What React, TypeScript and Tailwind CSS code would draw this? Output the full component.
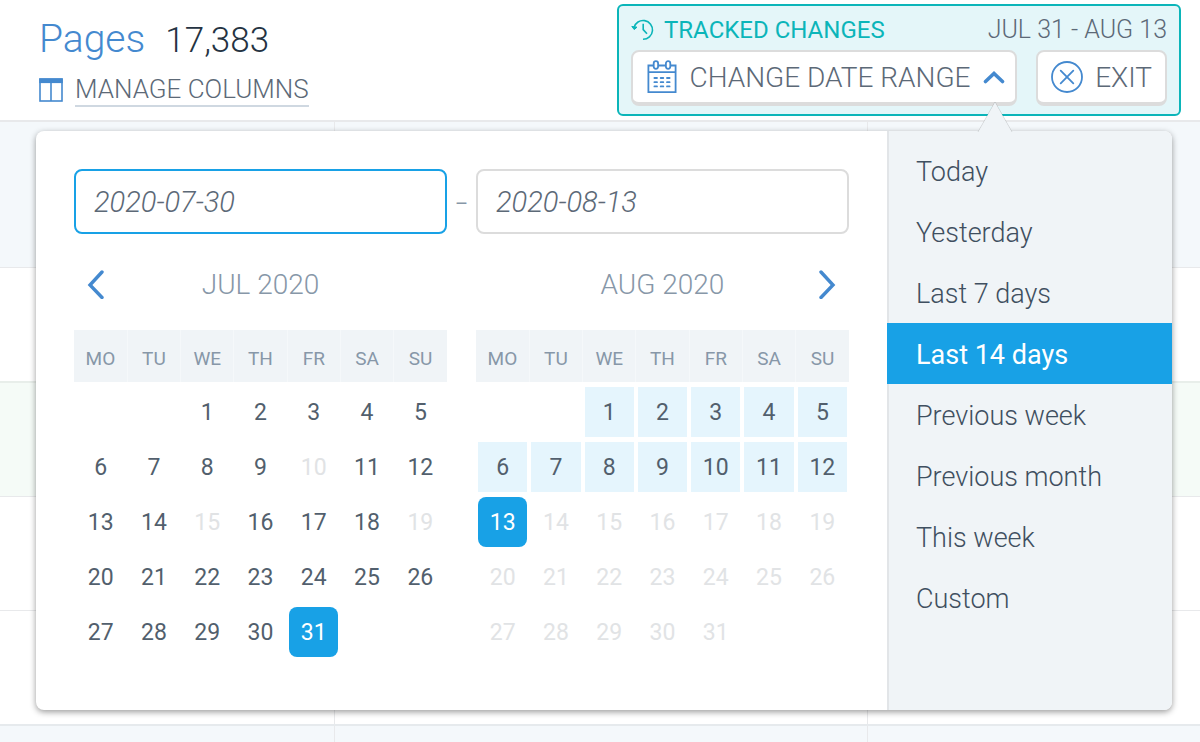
import { useState } from 'react';

type Month = {
  title: string;
  offset: number;
  days: number;
  selected: number;
  muted: number[];
  range: number[];
};

const WEEKDAYS = ['MO', 'TU', 'WE', 'TH', 'FR', 'SA', 'SU'];

const PRESETS = [
  'Today',
  'Yesterday',
  'Last 7 days',
  'Last 14 days',
  'Previous week',
  'Previous month',
  'This week',
  'Custom',
];

const days = (from: number, to: number) => Array.from({ length: to - from + 1 }, (_, i) => from + i);

const JULY: Month = { title: 'JUL 2020', offset: 2, days: 31, selected: 31, muted: [10, 15, 19], range: [] };
const AUGUST: Month = { title: 'AUG 2020', offset: 2, days: 31, selected: 13, muted: days(14, 31), range: days(1, 12) };

function toWeeks(month: Month) {
  const cells: (number | null)[] = [...Array(month.offset).fill(null), ...days(1, month.days)];
  while (cells.length % 7 !== 0) cells.push(null);
  const weeks: (number | null)[][] = [];
  for (let i = 0; i < cells.length; i += 7) weeks.push(cells.slice(i, i + 7));
  return weeks;
}

function ColumnsIcon() {
  return (
    <svg width="24" height="24" viewBox="0 0 24 24" fill="none" stroke="#4489cf" strokeWidth="1.6" aria-hidden="true">
      <rect x="1" y="1" width="22" height="22" />
      <path d="M0.2 2.8h23.6" strokeWidth="4.6" />
      <path d="M12 4v19" />
    </svg>
  );
}

function HistoryIcon() {
  return (
    <svg width="23" height="22" viewBox="0 0 23 22" fill="none" stroke="#0bb5b9" strokeWidth="1.6" aria-hidden="true">
      <path d="M3 8.6A9.4 9.4 0 1 1 12 20.3" />
      <path d="M12.2 4.8v5.8l3.8 4.2" />
      <path d="M0.8 7.4L3.2 10.6L6 8.2Z" fill="#0bb5b9" strokeWidth="1" strokeLinejoin="round" />
    </svg>
  );
}

function CalendarIcon() {
  return (
    <svg width="30" height="34" viewBox="0 0 30 34" fill="none" stroke="#4489cf" strokeWidth="1.8" aria-hidden="true">
      <path d="M6.7 5.5H1.4v26.6h27.2V5.5H23.3M11.3 5.5h7.4M1 12.2h28" />
      <rect x="6.7" y="1.2" width="4.4" height="7.6" rx="2.2" />
      <rect x="18.9" y="1.2" width="4.4" height="7.6" rx="2.2" />
      <path
        d="M7.4 18h2.6M13.7 18h2.6M20 18h2.6M7.4 22.2h2.6M13.7 22.2h2.6M20 22.2h2.6M7.4 26.4h2.6M13.7 26.4h2.6M20 26.4h2.6"
        strokeLinecap="round"
      />
    </svg>
  );
}

function CloseCircleIcon() {
  return (
    <svg width="32" height="32" viewBox="0 0 32 32" fill="none" stroke="#4489cf" strokeWidth="1.8" aria-hidden="true">
      <circle cx="16" cy="16" r="15" />
      <path d="M9.7 9.7l12.6 12.6M22.3 9.7l-12.6 12.6" strokeLinecap="round" />
    </svg>
  );
}

function Header() {
  return (
    <header className="flex items-start justify-between border-b-2 border-[#e8e9eb] bg-white pt-1 pr-[19px] pb-1 pl-[39px]">
      <div className="pt-3">
        <h1 className="flex items-baseline gap-5 leading-[46px] font-light">
          <span className="text-[39px] text-[#4489cf]">Pages</span>
          <span className="text-[35px] text-[#253342]">17,383</span>
        </h1>
        <button type="button" className="mt-[9px] flex items-center gap-3">
          <ColumnsIcon />
          <span className="border-b-2 border-[#cfd8e1] text-[26px] leading-[32px] font-light text-[#5c6977]">
            MANAGE COLUMNS
          </span>
        </button>
      </div>

      <section className="rounded-[6px] border-2 border-[#0bb5b9] bg-[#e4f6f9] px-3 pb-2">
        <div className="flex h-[44px] items-center justify-between pt-1">
          <h2 className="flex items-center gap-[10px] text-[24px] leading-[28px] text-[#0bb5b9]">
            <HistoryIcon />
            TRACKED CHANGES
          </h2>
          <span className="text-[25px] leading-[28px] font-light text-[#5c6977]">JUL 31 - AUG 13</span>
        </div>
        <div className="flex gap-[19px]">
          <button
            type="button"
            aria-expanded="true"
            className="flex h-[56px] w-[386px] items-center justify-between rounded-[8px] border-2 border-b-4 border-[#dcdcdc] bg-white pr-[10px] pl-[14px] text-[28px] font-light text-[#5c6977]"
          >
            <CalendarIcon />
            <span className="pt-[2px]">CHANGE DATE RANGE</span>
            <svg width="22" height="14" viewBox="0 0 22 14" fill="none" stroke="#4489cf" strokeWidth="3.6" aria-hidden="true">
              <path d="M2.5 11.5l8.5-8l8.5 8" strokeLinecap="round" />
            </svg>
          </button>
          <button
            type="button"
            className="flex h-[56px] w-[131px] items-center justify-between rounded-[8px] border-2 border-b-4 border-[#dcdcdc] bg-white px-[13px] text-[28px] font-light text-[#5c6977]"
          >
            <CloseCircleIcon />
            <span className="pt-[2px]">EXIT</span>
          </button>
        </div>
      </section>
    </header>
  );
}

function BackgroundRow({ className }: { className: string }) {
  return (
    <div className={`grid grid-cols-[335px_533px_1fr] ${className}`}>
      <div className="border-r border-[#e8e9eb]" />
      <div className="border-r border-[#e8e9eb]" />
      <div />
    </div>
  );
}

function Calendar({ month, nav }: { month: Month; nav: 'prev' | 'next' }) {
  const [selected, setSelected] = useState(month.selected);

  const dayClass = (day: number) => {
    if (day === selected) return 'rounded-[8px] bg-[#18a1e6] text-white';
    if (month.range.includes(day)) return 'bg-[#e5f5fd] text-[#525f6d]';
    if (month.muted.includes(day)) return 'text-[#e1e3e5]';
    return 'text-[#525f6d]';
  };

  return (
    <div className="min-w-0 flex-1">
      <div className="mt-[30px] mb-[26px] grid h-10 grid-cols-[44px_1fr_44px] items-center">
        {nav === 'prev' ? (
          <button type="button" aria-label="Previous month" className="flex justify-center">
            <svg width="18" height="30" viewBox="0 0 18 30" fill="none" stroke="#4489cf" strokeWidth="3.4" aria-hidden="true">
              <path d="M15 3L3 16L15 28.5" strokeLinecap="round" />
            </svg>
          </button>
        ) : (
          <span />
        )}
        <h3 className="pt-[2px] text-center text-[28px] leading-[32px] font-light text-[#8797a8]">{month.title}</h3>
        {nav === 'next' && (
          <button type="button" aria-label="Next month" className="flex justify-center">
            <svg width="18" height="30" viewBox="0 0 18 30" fill="none" stroke="#4489cf" strokeWidth="3.4" aria-hidden="true">
              <path d="M3 3L15 16L3 28.5" strokeLinecap="round" />
            </svg>
          </button>
        )}
      </div>
      <table className="w-full table-fixed border-collapse" aria-label={month.title}>
        <thead>
          <tr className="h-[52px] bg-[#f0f4f7]">
            {WEEKDAYS.map(day => (
              <th
                key={day}
                scope="col"
                className="border-r border-[#f5f8fa] p-0 pt-[6px] text-center text-[19px] font-normal text-[#8797a8] last:border-r-0"
              >
                {day}
              </th>
            ))}
          </tr>
        </thead>
        <tbody className="before:block before:h-[3px]">
          {toWeeks(month).map((week, i) => (
            <tr key={i}>
              {week.map((day, j) => (
                <td key={j} className="h-[55px] px-[2px] pt-[2px] pb-[3px]">
                  {day !== null && (
                    <button
                      type="button"
                      onClick={() => setSelected(day)}
                      className={`flex h-[50px] w-full items-center justify-center pt-[2px] text-[23px] ${dayClass(day)}`}
                    >
                      {day}
                    </button>
                  )}
                </td>
              ))}
            </tr>
          ))}
        </tbody>
      </table>
    </div>
  );
}

function DateRangePopover() {
  const [preset, setPreset] = useState('Last 14 days');
  const [start, setStart] = useState('2020-07-30');
  const [end, setEnd] = useState('2020-08-13');

  return (
    <div className="absolute top-[131px] right-7 left-9 flex rounded-[8px] bg-white shadow-[0_2px_6px_rgba(0,0,0,0.4)]">
      <svg className="absolute -top-[30px] right-[159px]" width="36" height="32" viewBox="0 0 36 32" aria-hidden="true">
        <path d="M1 31L18 1L35 31" fill="#f0f4f7" stroke="#000" strokeOpacity="0.12" />
        <path d="M1 32L18 2L35 32Z" fill="#f0f4f7" />
      </svg>

      <div className="min-w-0 flex-1 px-[38px] pt-[38px] pb-[50px]">
        <div className="flex items-center">
          <input
            type="text"
            aria-label="Start date"
            value={start}
            onChange={e => setStart(e.target.value)}
            className="h-[65px] min-w-0 flex-1 rounded-[8px] border-2 border-[#18a1e6] px-[18px] text-[29px] font-light text-[#5c6977] italic outline-none"
          />
          <span className="w-[29px] pt-1 text-center text-[20px] text-[#8797a8]">–</span>
          <input
            type="text"
            aria-label="End date"
            value={end}
            onChange={e => setEnd(e.target.value)}
            className="h-[65px] min-w-0 flex-1 rounded-[8px] border-2 border-[#dcdcdc] px-[18px] text-[29px] font-light text-[#5c6977] italic outline-none"
          />
        </div>
        <div className="flex gap-[29px]">
          <Calendar month={JULY} nav="prev" />
          <Calendar month={AUGUST} nav="next" />
        </div>
      </div>

      <ul className="w-[285px] shrink-0 rounded-r-[8px] bg-[#f0f4f7] pt-[9px] shadow-[inset_2px_0_0_#e2e5e8]">
        {PRESETS.map(name => (
          <li key={name}>
            <button
              type="button"
              onClick={() => setPreset(name)}
              className={`block h-[61px] w-full px-[29px] pt-[4px] text-left text-[27px] ${
                name === preset ? 'bg-[#18a1e6] text-white' : 'font-light text-[#3f4f60]'
              }`}
            >
              {name}
            </button>
          </li>
        ))}
      </ul>
    </div>
  );
}

export default function App() {
  return (
    <div className="relative min-h-screen overflow-hidden bg-white font-[Roboto,sans-serif]">
      <Header />
      <main>
        <BackgroundRow className="h-[146px] border-b border-[#e8e9eb] bg-[#f4f8fb]" />
        <BackgroundRow className="h-[115px] border-b-2 border-[#e8eeea]" />
        <BackgroundRow className="h-[114px] border-b border-[#e8e9eb] bg-[#f5fbf7]" />
        <BackgroundRow className="h-[114px] border-b border-[#e8e9eb]" />
        <BackgroundRow className="h-[115px] border-b-2 border-[#e6eaed]" />
        <BackgroundRow className="h-4 bg-[#f4f8fb]" />
      </main>
      <DateRangePopover />
    </div>
  );
}
